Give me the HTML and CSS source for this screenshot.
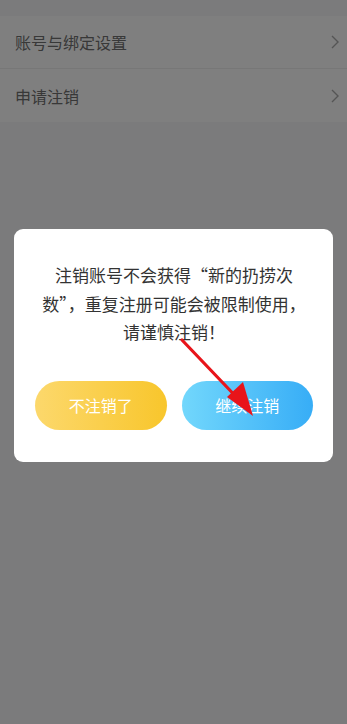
FILE: index.html
```html
<!DOCTYPE html>
<html lang="zh">
<head>
<meta charset="utf-8">
<link rel="stylesheet" href="styles.css">
</head>
<body>
<div class="page">
  <div class="list">
    <div class="row"><span class="label">账号与绑定设置</span><svg class="chev" viewBox="0 0 8 14" width="8" height="14"><path d="M1 1 L7 7 L1 13" fill="none" stroke="#aaaaaa" stroke-width="1.4"/></svg></div>
    <div class="row"><span class="label">申请注销</span><svg class="chev" viewBox="0 0 8 14" width="8" height="14"><path d="M1 1 L7 7 L1 13" fill="none" stroke="#aaaaaa" stroke-width="1.4"/></svg></div>
  </div>
</div>
<div class="mask">
  <div class="dialog">
    <p class="msg">注销账号不会获得“新的扔捞次<br>数”，重复注册可能会被限制使用，<br>请谨慎注销！</p>
    <div class="actions">
      <button class="btn btn-cancel">不注销了</button>
      <button class="btn btn-go">继续注销</button>
    </div>
  </div>
  <svg class="arrow" viewBox="0 0 347 724" width="347" height="724">
    <line x1="182" y1="340" x2="244" y2="405" stroke="#e8141a" stroke-width="3.2" stroke-linecap="round"/>
    <polygon points="253,416 227,397 243,382" fill="#e8141a"/>
  </svg>
</div>
</body>
</html>
```

FILE: styles.css
```css
* { box-sizing: border-box; }
html, body { margin: 0; padding: 0; }
body {
  width: 347px;
  height: 724px;
  overflow: hidden;
  background: #f6f6f8;
  font-family: "Noto Sans CJK SC", "Noto Sans", sans-serif;
}
.page { padding-top: 16px; }
.list { background: #ffffff; }
.row {
  height: 52px;
  display: flex;
  align-items: center;
  justify-content: space-between;
  padding: 0 8px 0 15px;
}
.row + .row { border-top: 1px solid #eeeeee; height: 54px; }
.label { font-size: 16px; color: #707070; }
.chev { display: block; }
.mask {
  position: fixed;
  inset: 0;
  background: rgba(0, 0, 0, 0.5);
  padding-top: 229px;
}
.dialog {
  margin: 0 14px;
  height: 233px;
  background: #ffffff;
  border-radius: 9px;
  padding: 32px 20px 0 21px;
}
.msg {
  margin: 0;
  font-size: 17px;
  line-height: 28.5px;
  color: #333333;
  text-align: center;
  white-space: nowrap;
}
.actions {
  display: flex;
  gap: 15px;
  margin-top: 34px;
}
.btn {
  flex: 1;
  height: 49px;
  border: 0;
  border-radius: 25px;
  color: #ffffff;
  font-size: 16px;
  font-family: "Noto Sans CJK SC", "Noto Sans", sans-serif;
  padding: 0;
}
.btn-cancel { background: linear-gradient(90deg, #fcd86c, #f8c62c); }
.btn-go { background: linear-gradient(90deg, #72d7fc, #37adf6); }
.arrow {
  position: absolute;
  left: 0;
  top: 0;
}
```
